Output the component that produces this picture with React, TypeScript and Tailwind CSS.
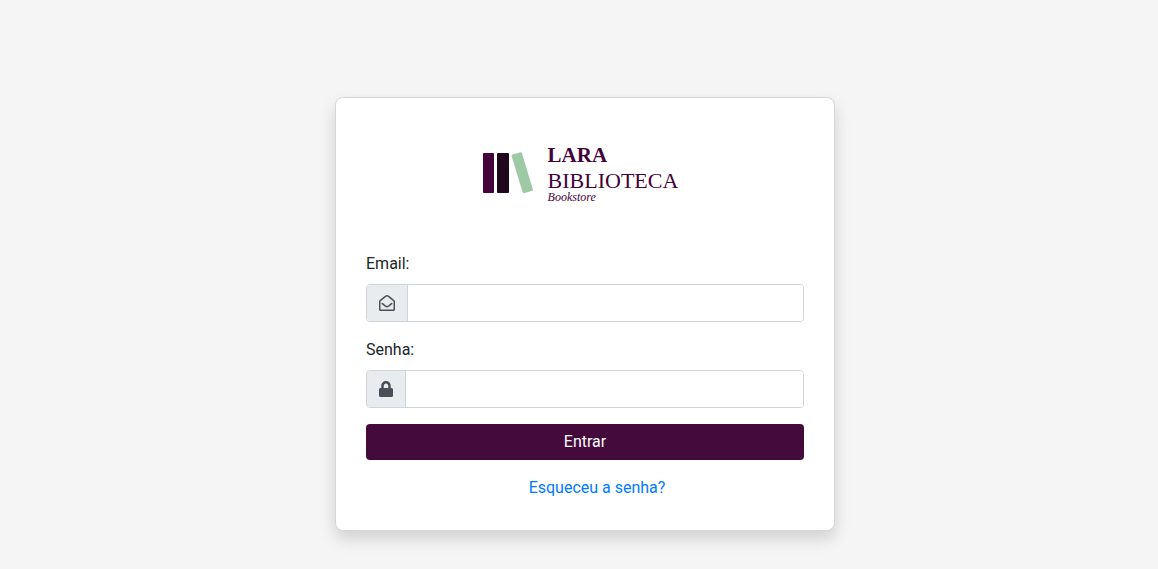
import { useState, type ReactNode } from "react";
import { FaLock, FaRegEnvelopeOpen } from "react-icons/fa";

function Logo() {
  return (
    <div className="mb-12 flex h-[76px] items-start justify-center gap-3.5 pt-3 pr-2.5">
      <svg viewBox="0 0 52 44" className="mt-3 h-11 w-[52px]" aria-hidden="true">
        <rect x="1" y="1" width="11" height="40" rx="1" fill="#43033a" />
        <rect x="15" y="1" width="12" height="40" rx="1" fill="#21071b" />
        <path
          d="M30.5 2.6 38.6 0.3Q39.6 0 39.9 1L50.9 37.5Q51.2 38.5 50.2 38.8L42 41.2Q41 41.5 40.7 40.5L29.6 4Q29.4 2.9 30.5 2.6Z"
          fill="#9fc8a5"
        />
      </svg>
      <div className="flex flex-col font-['Liberation_Serif',serif] text-[#43033a]">
        <span className="text-[21px] leading-[30px] font-bold">LARA</span>
        <span className="text-[22px] leading-[22px]">BIBLIOTECA</span>
        <span className="text-xs leading-[10px] italic">Bookstore</span>
      </div>
    </div>
  );
}

type FieldProps = {
  id: string;
  label: string;
  type: string;
  icon: ReactNode;
  value: string;
  onChange: (value: string) => void;
};

function Field({ id, label, type, icon, value, onChange }: FieldProps) {
  return (
    <div className="mb-4">
      <label htmlFor={id} className="mb-2 block">
        {label}
      </label>
      <div className="flex h-[38px] overflow-hidden rounded border border-[#ced4da] focus-within:border-[#80bdff]">
        <span className="flex items-center border-r border-[#ced4da] bg-[#e9ecef] px-3 text-[#495057]">
          {icon}
        </span>
        <input
          id={id}
          type={type}
          value={value}
          onChange={(event) => onChange(event.target.value)}
          className="min-w-0 flex-1 bg-white px-3 outline-none"
        />
      </div>
    </div>
  );
}

export default function App() {
  const [email, setEmail] = useState("");
  const [password, setPassword] = useState("");

  return (
    <main className="min-h-screen bg-[#f5f5f5] pt-[97px] pb-8 pl-3 font-[Roboto,sans-serif] text-base text-[#212529]">
      <form
        onSubmit={(event) => event.preventDefault()}
        className="mx-auto w-full max-w-[500px] rounded-lg border border-[#d6d6d6] bg-white p-[30px] shadow-[0_8px_16px_rgba(0,0,0,0.15)]"
      >
        <Logo />
        <Field
          id="email"
          label="Email:"
          type="email"
          icon={<FaRegEnvelopeOpen className="size-4" />}
          value={email}
          onChange={setEmail}
        />
        <Field
          id="senha"
          label="Senha:"
          type="password"
          icon={<FaLock className="h-4 w-3.5" />}
          value={password}
          onChange={setPassword}
        />
        <button type="submit" className="block h-9 w-full cursor-pointer rounded bg-[#450a3c] text-white">
          Entrar
        </button>
        <div className="mt-4 pl-6 text-center">
          <a href="#recuperar" className="text-[#007bff] hover:underline">
            Esqueceu a senha?
          </a>
        </div>
      </form>
    </main>
  );
}
